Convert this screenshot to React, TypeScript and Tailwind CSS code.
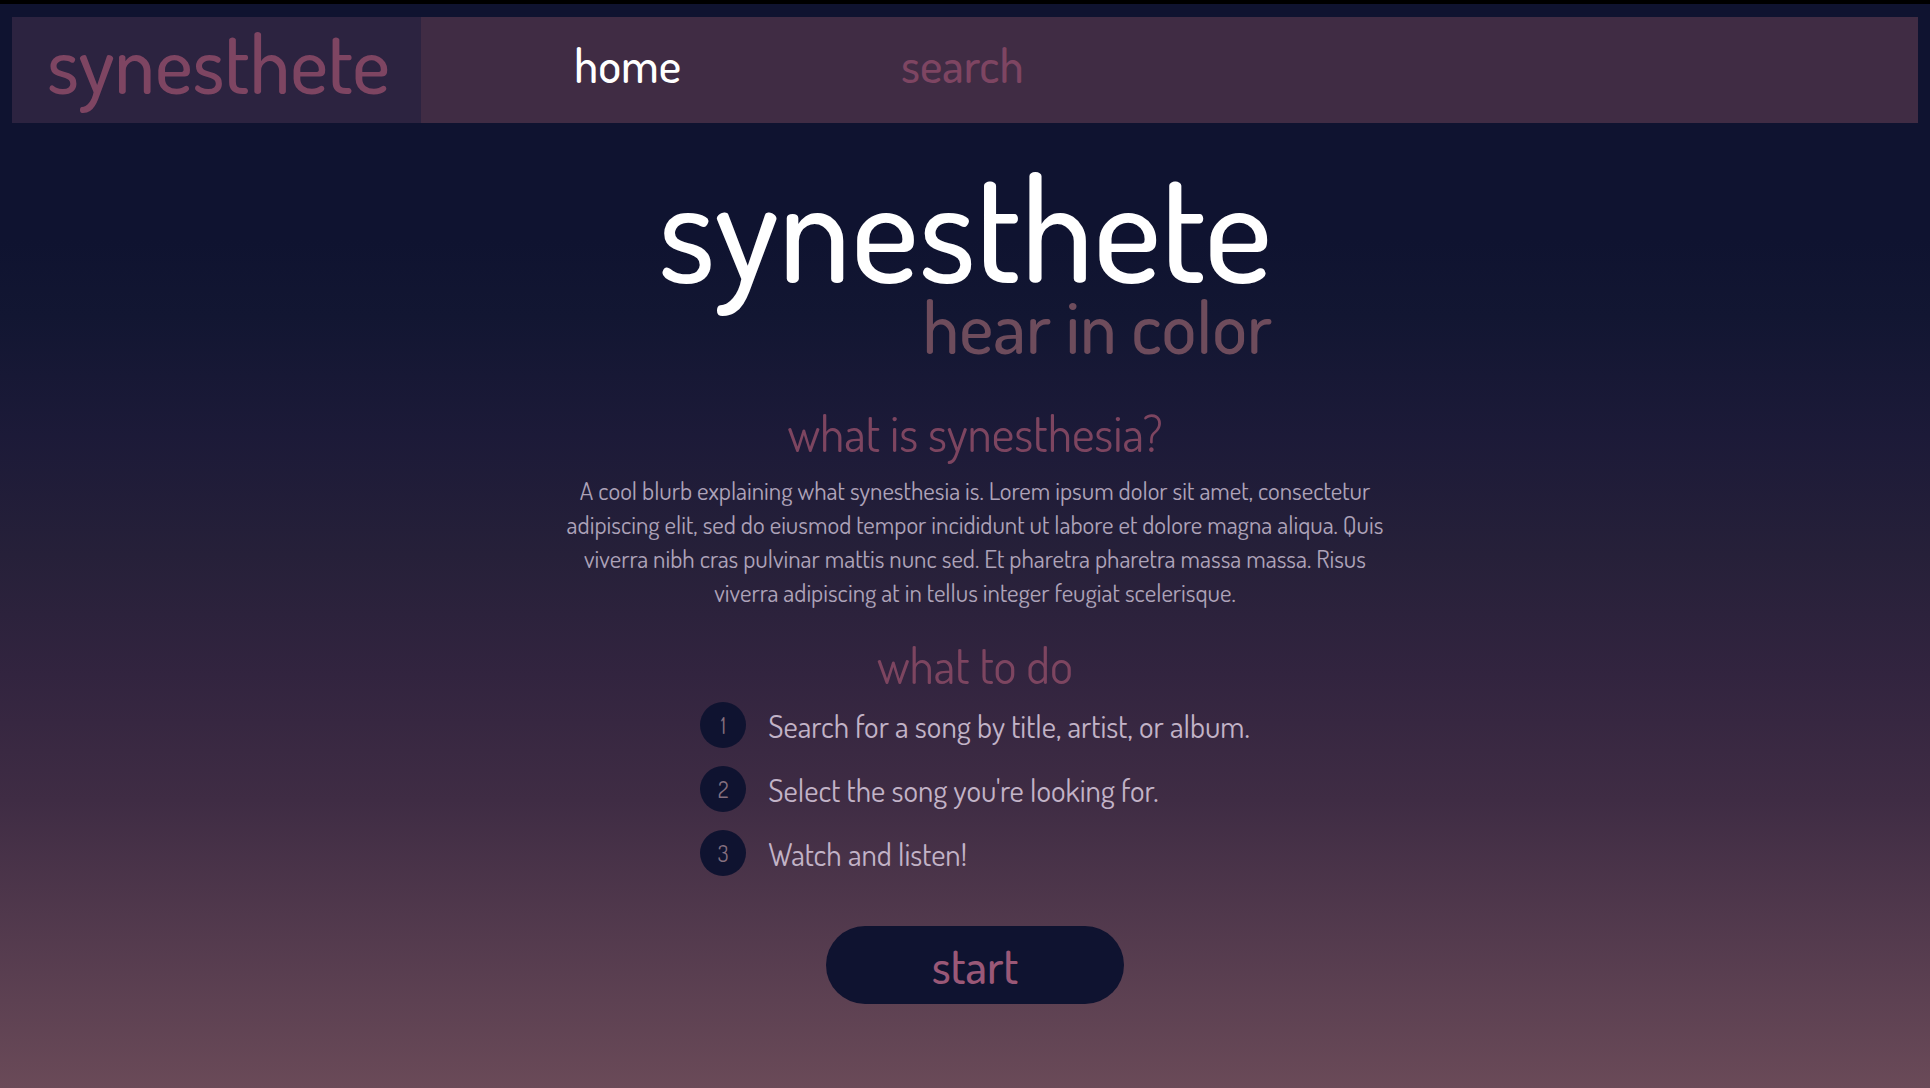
import React from "react";

const STEPS = [
  "Search for a song by title, artist, or album.",
  "Select the song you're looking for.",
  "Watch and listen!",
];

export default function App() {
  return (
    <div className="min-h-screen w-full bg-[linear-gradient(to_bottom,#0f1330_0%,#0f1330_22%,#121632_29%,#1c1a38_40%,#262039_51%,#32243f_62%,#3f2c44_73.5%,#6a4a58_100%)] font-['Dosis','Noto_Sans',sans-serif]">
      <div className="h-1 bg-black" />

      {/* nav */}
      <nav className="mx-3 mt-[13px] flex h-[106px] bg-[#402c44]">
        <div className="flex w-[409px] items-center bg-[#2c2340] pb-[15px] pl-[35px] text-[81px] font-medium leading-none text-[#7e4562]">
          synesthete
        </div>
        <div className="flex items-center pb-[13px]">
          <a className="ml-[153px] text-[48px] font-medium leading-none text-white" href="#">
            home
          </a>
          <a className="ml-[220px] text-[48px] font-medium leading-none text-[#7e4562]" href="#">
            search
          </a>
        </div>
      </nav>

      <main className="flex flex-col items-center">
        <div className="mt-[30px] flex flex-col items-end">
          <h1 className="text-[145px] font-medium leading-none text-white">
            synesthete
          </h1>
          <p className="-mt-[9px] text-[73px] font-medium leading-none text-[#6e4c5c]">
            hear in color
          </p>
        </div>

        <div className="flex flex-col items-center pl-5">
          <h2 className="mt-[47px] text-[49px] leading-none text-[#7d4560]">
            what is synesthesia?
          </h2>
          <p className="mt-[15px] max-w-[826px] text-center text-[25px] leading-[34px] text-[#ada2b8]">
            A cool blurb explaining what synesthesia is. Lorem ipsum dolor sit
            amet, consectetur adipiscing elit, sed do eiusmod tempor incididunt
            ut labore et dolore magna aliqua. Quis viverra nibh cras pulvinar
            mattis nunc sed. Et pharetra pharetra massa massa. Risus viverra
            adipiscing at in tellus integer feugiat scelerisque.
          </p>

          <h2 className="mt-[32px] text-[49px] leading-none text-[#7d4560]">
            what to do
          </h2>
          <ol className="mt-[12px] flex flex-col gap-[18px]">
            {STEPS.map((s, i) => (
              <li key={s} className="flex h-[46px] items-center gap-[22px]">
                <span className="flex h-[46px] w-[46px] items-center justify-center rounded-full bg-[#0f1330] text-[22px] text-[#85707f]">
                  {i + 1}
                </span>
                <span className="text-[31px] leading-none text-[#c2b3c7]">{s}</span>
              </li>
            ))}
          </ol>

          <button className="mt-[50px] flex h-[78px] w-[298px] items-center justify-center rounded-full bg-[#0f1330] text-[48px] font-medium leading-none text-[#9a5877]">
            start
          </button>
        </div>
      </main>
    </div>
  );
}
